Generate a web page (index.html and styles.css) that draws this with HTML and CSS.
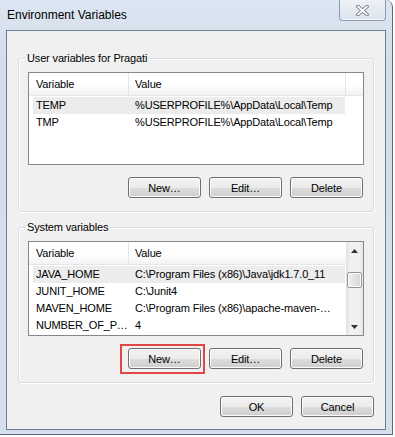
FILE: index.html
```html
<!DOCTYPE html>
<html lang="en">
<head>
  <meta charset="UTF-8">
  <title>Environment Variables</title>
  <link rel="stylesheet" href="styles.css">
</head>
<body>
  <div class="window">
    <div class="titlebar">
      <span class="title">Environment Variables</span>
      <span class="close">
        <svg width="13" height="11" viewBox="0 0 13 11">
          <path d="M2 1.5 L11 9.5 M11 1.5 L2 9.5" stroke="#6d7380" stroke-width="3.6" stroke-linecap="round"/>
          <path d="M2 1.5 L11 9.5 M11 1.5 L2 9.5" stroke="#fff" stroke-width="1.8" stroke-linecap="round"/>
        </svg>
      </span>
    </div>

    <div class="client">
      <fieldset class="group">
        <legend>User variables for Pragati</legend>
        <div class="list">
          <div class="list-body">
            <div class="list-head">
              <span class="head-var">Variable</span>
              <span class="head-val">Value</span>
              <span class="head-fill"></span>
            </div>
            <div class="row sel"><span class="cell-var">TEMP</span><span class="cell-val">%USERPROFILE%\AppData\Local\Temp</span></div>
            <div class="row"><span class="cell-var">TMP</span><span class="cell-val">%USERPROFILE%\AppData\Local\Temp</span></div>
          </div>
        </div>
        <div class="btns">
          <button class="btn">New…</button>
          <button class="btn">Edit…</button>
          <button class="btn">Delete</button>
        </div>
      </fieldset>

      <fieldset class="group group-sys">
        <legend>System variables</legend>
        <div class="list list-sys">
          <div class="list-body">
            <div class="list-head">
              <span class="head-var">Variable</span>
              <span class="head-val">Value</span>
            </div>
            <div class="row sel"><span class="cell-var">JAVA_HOME</span><span class="cell-val">C:\Program Files (x86)\Java\jdk1.7.0_11</span></div>
            <div class="row"><span class="cell-var">JUNIT_HOME</span><span class="cell-val">C:\Junit4</span></div>
            <div class="row"><span class="cell-var">MAVEN_HOME</span><span class="cell-val">C:\Program Files (x86)\apache-maven-…</span></div>
            <div class="row"><span class="cell-var">NUMBER_OF_P…</span><span class="cell-val">4</span></div>
          </div>
          <div class="scrollbar">
            <span class="sb-btn">
              <svg width="7" height="4" viewBox="0 0 7 4"><path d="M0 4 L3.5 0 L7 4 Z" fill="#333"/></svg>
            </span>
            <span class="sb-thumb"></span>
            <span class="sb-btn sb-down">
              <svg width="7" height="4" viewBox="0 0 7 4"><path d="M0 0 L7 0 L3.5 4 Z" fill="#333"/></svg>
            </span>
          </div>
        </div>
        <div class="btns">
          <button class="btn btn-marked">New…</button>
          <button class="btn">Edit…</button>
          <button class="btn">Delete</button>
        </div>
      </fieldset>

      <div class="btns dialog-btns">
        <button class="btn">OK</button>
        <button class="btn">Cancel</button>
      </div>
    </div>
  </div>
</body>
</html>
```

FILE: styles.css
```css
body { margin: 0; background: #fff; font: 11px "Liberation Sans", Arial, sans-serif; letter-spacing: -0.15px; color: #000; }

/* window frame */
.window { width: 392px; height: 434px; display: flex; flex-direction: column; border-right: 1px solid #5b6777; border-bottom: 1px solid #5b6777; border-top-right-radius: 7px; background: linear-gradient(#dce6f2, #d4deea 60px, #d6e0ec); }
.titlebar { height: 30px; flex: none; display: flex; align-items: flex-start; padding-left: 7px; }
.title { margin-top: 8px; font-size: 12px; line-height: 15px; letter-spacing: 0; color: #000; }
.close { margin-left: auto; margin-right: 6px; width: 45px; height: 20px; display: flex; align-items: center; justify-content: center; border: 1px solid #8e9bad; border-top: 0; border-radius: 0 0 4px 4px; background: linear-gradient(#eef2f7, #dbe3ed); box-shadow: inset 0 -1px 0 #f4f7fb; }

.client { flex: 1; margin: 0 6px 4px; padding: 20px 11px 0; display: flex; flex-direction: column; border: 1px solid #6f7d8c; background: #f0f0f0; }

/* group boxes */
.group { margin: 0; padding: 7px 9px 13px; min-width: 0; border: 1px solid #d5dfe5; border-radius: 3px; box-shadow: inset 1px 1px 0 #fff, 1px 1px 0 #fff; }
.group legend { padding: 0 1px; margin-left: -2px; line-height: 14px; }
.group-sys { margin-top: 8px; }

/* list views */
.list { height: 93px; box-sizing: border-box; display: flex; border: 1px solid #828790; background: #fff; }
.list-sys { height: 95px; }
.list-body { flex: 1; min-width: 0; }
.list-head { display: flex; height: 23px; box-sizing: border-box; margin-bottom: 1px; line-height: 22px; border-bottom: 1px solid #e5e5e5; background: linear-gradient(#fff 55%, #f2f3f5); }
.head-var { width: 100px; box-sizing: border-box; padding-left: 7px; border-right: 1px solid #e3e5e8; }
.head-val { width: 217px; box-sizing: border-box; padding-left: 6px; border-right: 1px solid #e3e5e8; }
.list-sys .head-val { flex: 1; border-right: 0; }
.head-fill { flex: 1; }
.row { display: flex; width: 312px; height: 17px; margin-left: 4px; line-height: 17px; white-space: nowrap; }
.row.sel { background: #ececec; }
.cell-var { width: 96px; box-sizing: border-box; padding-left: 3px; }
.cell-val { width: 216px; box-sizing: border-box; padding-left: 6px; overflow: hidden; }

.scrollbar { width: 17px; flex: none; display: flex; flex-direction: column; background: linear-gradient(90deg, #e2e2e2, #f1f1f1 25%, #f1f1f1 75%, #e6e6e6); }
.sb-btn { height: 17px; display: flex; align-items: center; justify-content: center; }
.sb-thumb { height: 14px; margin: 13px 1px 0; border: 1px solid #979797; border-radius: 2px; background: linear-gradient(90deg, #f3f3f3, #e2e2e2 50%, #d6d6d6); box-shadow: inset 0 0 0 1px #fbfbfb; }
.sb-down { margin-top: auto; }

/* buttons */
.btns { display: flex; justify-content: flex-end; gap: 8px; margin-top: 12px; padding-right: 1px; }
.btn { width: 73px; height: 21px; padding: 0; font: inherit; letter-spacing: inherit; color: #000; border: 1px solid #707070; border-radius: 3px; background: linear-gradient(#f2f2f2, #ebebeb 50%, #dddddd 50%, #cfcfcf); box-shadow: inset 0 0 0 1px #fcfcfc; }
.btn-marked { position: relative; }
.btn-marked::after { content: ""; position: absolute; top: -5px; left: -9px; right: -5px; bottom: -6px; border: 2px solid #e04646; }
.dialog-btns { margin-top: 13px; padding-right: 0; }
```
